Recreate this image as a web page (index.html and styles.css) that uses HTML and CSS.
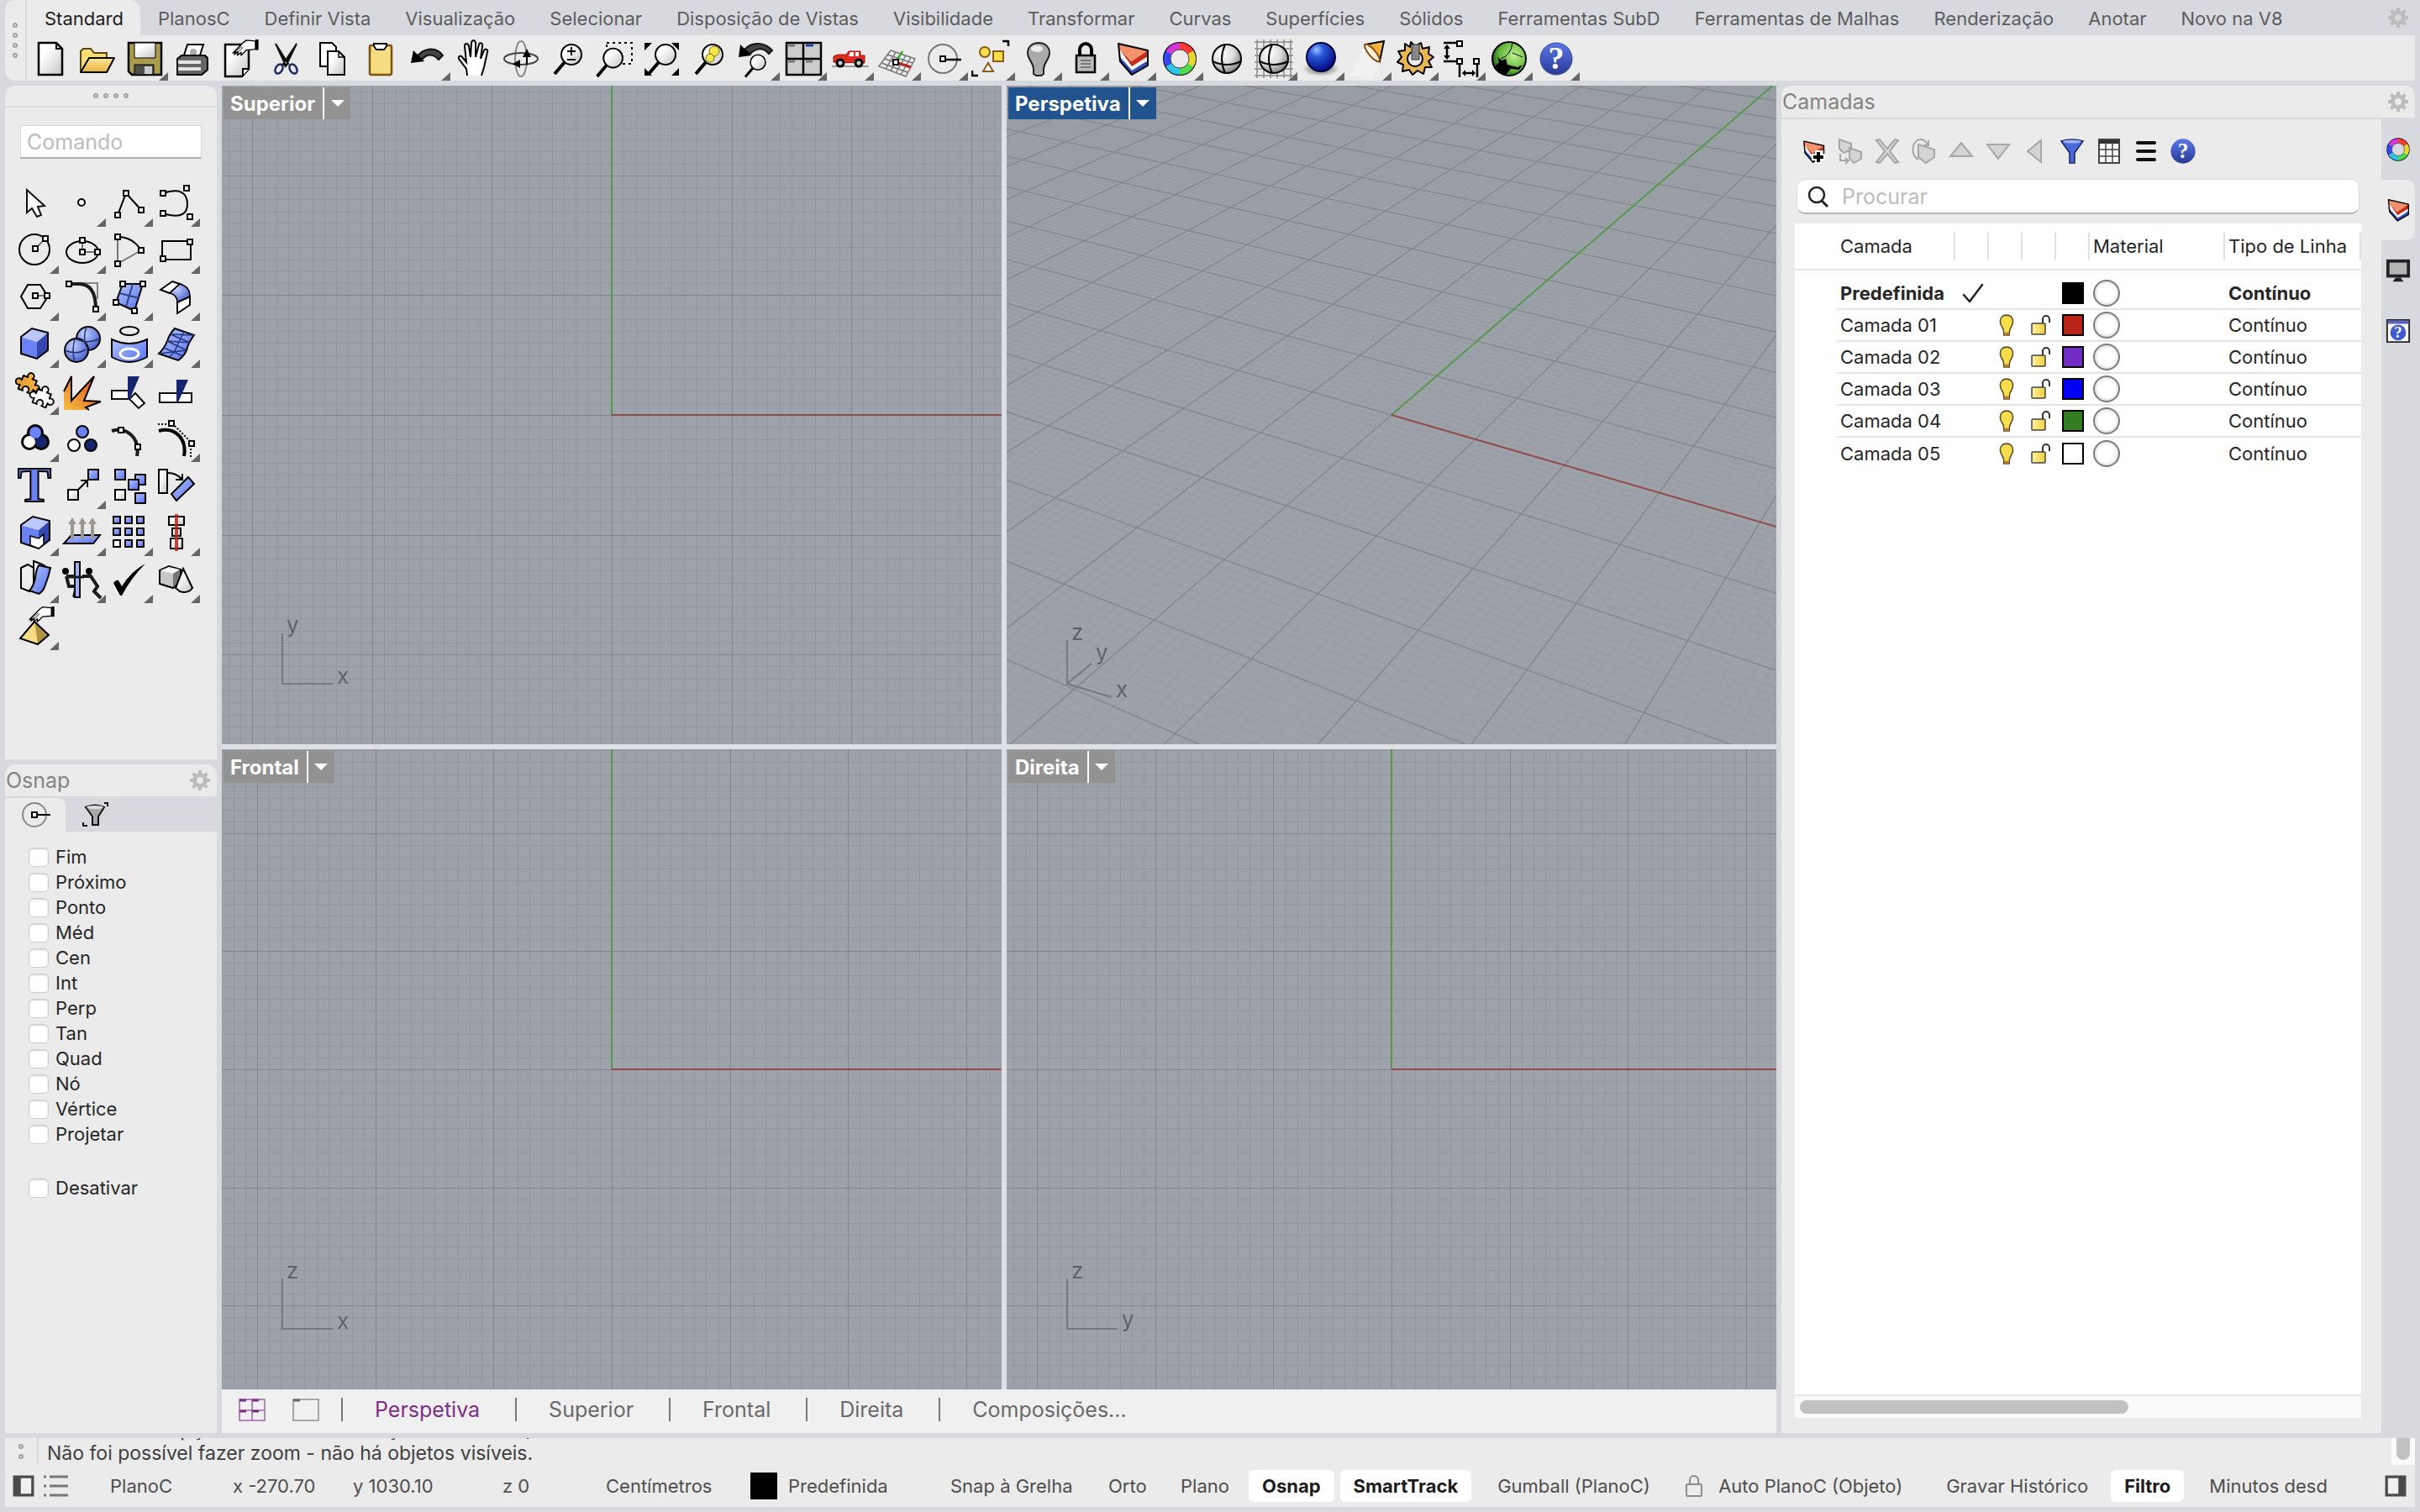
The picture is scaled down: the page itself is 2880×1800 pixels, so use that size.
FILE: index.html
```html
<!DOCTYPE html>
<html lang="pt">
<head>
    <meta charset="UTF-8">
    <meta name="viewport" content="width=device-width, initial-scale=1.0">
    <title>Rhino</title>
    <link rel="stylesheet" href="styles.css">
</head>
<body>
    <!-- shared gradients and shapes -->
    <svg class="defs" aria-hidden="true">
        <defs>
            <linearGradient id="paper" x1="0" y1="0" x2="1" y2="1"><stop offset="0.3" stop-color="#fff"/><stop offset="1" stop-color="#c4c4c4"/></linearGradient>
            <linearGradient id="blue" x1="0" y1="0" x2="1" y2="1"><stop offset="0" stop-color="#b4c4fb"/><stop offset="1" stop-color="#5470ee"/></linearGradient>
            <linearGradient id="yellow" x1="0" y1="0" x2="0" y2="1"><stop offset="0" stop-color="#fbe79a"/><stop offset="1" stop-color="#eab03a"/></linearGradient>
            <linearGradient id="orange" x1="0" y1="1" x2="1" y2="0"><stop offset="0" stop-color="#e8902a"/><stop offset="1" stop-color="#f5c04a"/></linearGradient>
            <linearGradient id="fire" x1="0" y1="1" x2="1" y2="0"><stop offset="0" stop-color="#f5c342"/><stop offset="1" stop-color="#e4421e"/></linearGradient>
            <linearGradient id="help" x1="0" y1="0" x2="0" y2="1"><stop offset="0" stop-color="#5b78e8"/><stop offset="1" stop-color="#2a3a94"/></linearGradient>
            <linearGradient id="lid" x1="0" y1="0" x2="1" y2="0"><stop offset="0" stop-color="#fff3a0"/><stop offset="1" stop-color="#f0cf3c"/></linearGradient>
            <radialGradient id="ball" cx="0.35" cy="0.3" r="0.8"><stop offset="0" stop-color="#fff"/><stop offset="0.5" stop-color="#dcdcdc"/><stop offset="1" stop-color="#6c6c6c"/></radialGradient>
            <radialGradient id="bball" cx="0.35" cy="0.3" r="0.8"><stop offset="0" stop-color="#c2d0ff"/><stop offset="1" stop-color="#3d57c8"/></radialGradient>
            <radialGradient id="navy" cx="0.35" cy="0.25" r="0.8"><stop offset="0" stop-color="#9cc4ff"/><stop offset="0.3" stop-color="#2a5ad8"/><stop offset="1" stop-color="#00007c"/></radialGradient>
            <radialGradient id="green" cx="0.65" cy="0.4" r="0.75"><stop offset="0" stop-color="#bdf28c"/><stop offset="0.6" stop-color="#63b43c"/><stop offset="1" stop-color="#123d0c"/></radialGradient>
            <radialGradient id="shade"><stop offset="0" stop-color="#555"/><stop offset="1" stop-color="#555" stop-opacity="0"/></radialGradient>
            <rect id="h" x="-3" y="-3" width="6" height="6" fill="#fff" stroke="#000" stroke-width="2"/>
            <g id="gear" fill="#bcbcbc"><circle cx="12" cy="12" r="6.5" fill="none" stroke="#bcbcbc" stroke-width="5"/><path d="M10 0h4v6h-4zM10 18h4v6h-4zM0 10h6v4H0zM18 10h6v4h-6zM2.100 4.900l2.800-2.800 4 4-2.800 2.800zM15.100 17.900l2.800-2.800 4 4-2.800 2.800zM19.100 2.100l2.800 2.800-4 4-2.800-2.800zM6.100 15.100l2.800 2.800-4 4-2.800-2.800z"/></g>
            <g id="layers"><path d="M7 20L23 37L42 26V32L23 43L9 27Z" fill="#2a4cc0"/><path d="M7 13L23 32L42 20V26L23 38L8 20Z" fill="#f4f4f4"/><path d="M22 27L42 14V21L23 33L7 10Z" fill="#c82c1c"/><path d="M7 6L42 14L23 27L7 12Z" fill="#f2916a"/><path d="M7 6L42 14V32L23 43L9 27Z" fill="none" stroke="#000" stroke-width="2" stroke-linejoin="round"/></g>
            <g id="wheel" fill="none" stroke-width="8"><circle cx="24" cy="24" r="19" stroke="#000" stroke-width="2"/><path d="M24 9A15 15 0 0 1 37 16.500" stroke="#ff3a30"/><path d="M37 16.500A15 15 0 0 1 37 31.500" stroke="#e6d82a"/><path d="M37 31.500A15 15 0 0 1 24 39" stroke="#4ed84a"/><path d="M24 39A15 15 0 0 1 11 31.500" stroke="#2ac4e8"/><path d="M11 31.500A15 15 0 0 1 11 16.500" stroke="#3446f0"/><path d="M11 16.500A15 15 0 0 1 24 9" stroke="#d436d8"/><circle cx="24" cy="24" r="11" stroke="#444" stroke-width="1"/></g>
            <g id="bulb"><path d="M8 1C3.500 1 1 4 1 8C1 13 5 15 5 20V23H11V20C11 15 15 13 15 8C15 4 12.500 1 8 1Z" fill="#f9dc4a" stroke="#54502e" stroke-width="1.500"/><path d="M5.500 20H10.500V23H5.500Z" fill="#c07a2c"/></g>
            <g id="unlock"><path d="M14 10V5a4 4 0 0 1 8 0V9" fill="none" stroke="#333" stroke-width="2"/><rect x="1" y="10" width="16" height="13" rx="1" fill="url(#lid)" stroke="#444" stroke-width="1.500"/></g>
            <g id="mag"><path d="M20 28L8 42" stroke="#000" stroke-width="4"/><circle cx="28" cy="19" r="12" fill="url(#paper)" stroke="#000" stroke-width="2"/></g>
            <g id="hand"><path d="M24 14L10 28L14 26L12 30L17 26L16 31L21 27L21 31L28 24L40 23V12L28 11Z" fill="#fff" stroke="#000" stroke-width="1.500" stroke-linejoin="round"/><path d="M40 10h4v14h-4z"/><path d="M15 25l7-6M18 26l6-6" fill="none" stroke="#000" stroke-width="1"/></g>
            <g id="check"><path d="M2 14L9 22L24 2" fill="none" stroke="#222" stroke-width="2.500" stroke-linecap="round" stroke-linejoin="round"/></g>
            <path id="piece" d="M0 0H6A4 4 0 1 1 12 0H18V6A4 4 0 1 1 18 12V18H12A4 4 0 1 0 6 18H0V12A4 4 0 1 1 0 6Z" stroke="#000" stroke-width="2" stroke-linejoin="round"/>
        </defs>
    </svg>

    <header class="topbar">
        <div class="grip"><i></i><i></i><i></i><i></i></div>
        <div class="topbar-main">
            <nav class="tabs">
                <button class="tab active">Standard</button>
                <button class="tab">PlanosC</button>
                <button class="tab">Definir Vista</button>
                <button class="tab">Visualização</button>
                <button class="tab">Selecionar</button>
                <button class="tab">Disposição de Vistas</button>
                <button class="tab">Visibilidade</button>
                <button class="tab">Transformar</button>
                <button class="tab">Curvas</button>
                <button class="tab">Superfícies</button>
                <button class="tab">Sólidos</button>
                <button class="tab">Ferramentas SubD</button>
                <button class="tab">Ferramentas de Malhas</button>
                <button class="tab">Renderização</button>
                <button class="tab">Anotar</button>
                <button class="tab">Novo na V8</button>
                <button class="gear-btn" aria-label="Opções"><svg viewBox="0 0 24 24"><use href="#gear"/></svg></button>
            </nav>
            <div class="toolbar">
                <button class="tool" aria-label="Novo"><svg viewBox="0 0 48 48"><path d="M10 5H31L38 12V43H10Z" fill="url(#paper)" stroke="#000" stroke-width="2.500"/><path d="M31 5V12H38" fill="none" stroke="#000" stroke-width="2"/></svg></button>
                <button class="tool" aria-label="Abrir"><svg viewBox="0 0 48 48"><path d="M4 40V15L7 12H16L20 17H35V23" fill="#f7dc78" stroke="#5d4408" stroke-width="2"/><path d="M4 40L14 23H44L35 40Z" fill="url(#yellow)" stroke="#000" stroke-width="2" stroke-linejoin="round"/></svg></button>
                <button class="tool more" aria-label="Gravar"><svg viewBox="0 0 48 48"><path d="M5 5H44V43H9L5 39Z" fill="#a99c4c" stroke="#000" stroke-width="2.500"/><path d="M12 5H37V23H12Z" fill="url(#paper)" stroke="#000"/><path d="M12 31H35V43H12Z" fill="#4d4d4d" stroke="#000"/><path d="M24 33H33V42H24Z" fill="#ccc"/></svg></button>
                <button class="tool" aria-label="Imprimir"><svg viewBox="0 0 48 48"><path d="M14 23L19 7H38L33 23Z" fill="#fff" stroke="#000" stroke-width="2"/><circle cx="26" cy="16" r="4" fill="#aaa"/><path d="M7 24L12 20H40L43 23V37L36 43H7Z" fill="#666" stroke="#000" stroke-width="2"/><path d="M8 26H35V30H8ZM8 34H35V38H8Z" fill="#e4e4e4"/></svg></button>
                <button class="tool" aria-label="Notas"><svg viewBox="0 0 48 48"><path d="M8 7H36V36L28 45H8Z" fill="url(#paper)" stroke="#000" stroke-width="2.500"/><path d="M36 36H29V44" fill="#fff" stroke="#000" stroke-width="2"/><g transform="translate(8 -8) scale(.9)"><use href="#hand"/></g></svg></button>
                <button class="tool" aria-label="Cortar"><svg viewBox="0 0 48 48"><path d="M12 6L27 30L24 32ZM37 6L21 30L24 33Z" stroke="#111" stroke-width="2"/><ellipse cx="16" cy="36" rx="4" ry="6" transform="rotate(30 16 36)" fill="none" stroke="#1c2c66" stroke-width="2.500"/><ellipse cx="33" cy="36" rx="4" ry="6" transform="rotate(-30 33 36)" fill="none" stroke="#1c2c66" stroke-width="2.500"/></svg></button>
                <button class="tool" aria-label="Copiar"><svg viewBox="0 0 48 48"><path d="M9 5H23L28 10V33H9Z" fill="#fff" stroke="#000" stroke-width="2"/><path d="M18 15H31L38 22V43H18Z" fill="url(#paper)" stroke="#000" stroke-width="2"/><path d="M31 15V22H38" fill="none" stroke="#000" stroke-width="1.500"/></svg></button>
                <button class="tool" aria-label="Colar"><svg viewBox="0 0 48 48"><rect x="12" y="8" width="26" height="35" rx="2" fill="#f8dc82" stroke="#7a5410" stroke-width="2.500"/><path d="M17 6H32V9L29 13H20L17 9Z" fill="#fff" stroke="#000" stroke-width="2"/></svg></button>
                <button class="tool more" aria-label="Anular"><svg viewBox="0 0 48 48"><path d="M12 22C19 12 34 8 43 20L38 25C32 18 24 18 19 24Z" fill="#444" stroke="#111" stroke-width="2"/><path d="M5 29L8 14L21 27Z"/></svg></button>
                <button class="tool" aria-label="Panorâmica"><svg viewBox="0 0 48 48"><path d="M16 44L15 36L6 24C5 20 9 20 10 22L15 28L13 9C13 5 17 5 18 9L20 22L21 5C22 1 25 1 26 5V22L30 7C31 4 35 5 34 9L32 24L36 14C38 11 41 13 40 16L36 34L33 44" fill="#fff" stroke="#000" stroke-width="2"/></svg></button>
                <button class="tool" aria-label="Rodar Vista"><svg viewBox="0 0 48 48"><ellipse cx="24" cy="24" rx="7" ry="21" fill="none" stroke="#888" stroke-width="2"/><ellipse cx="24" cy="24" rx="20" ry="7" fill="none" stroke="#444" stroke-width="2"/><path d="M31 20V31" stroke="#000" stroke-width="2"/><path d="M26 22L31 12L36 22ZM14 30L23 25V35Z"/></svg></button>
                <button class="tool" aria-label="Zoom"><svg viewBox="0 0 48 48"><use href="#mag"/><path d="M23 15h10M28 10v10M23 25h10" stroke="#000" stroke-width="2"/></svg></button>
                <button class="tool" aria-label="Zoom Janela"><svg viewBox="0 0 48 48"><path d="M14 5H44V30H14Z" fill="none" stroke="#000" stroke-width="2" stroke-dasharray="3 4"/><g transform="translate(-5 5) scale(.95)"><use href="#mag"/></g></svg></button>
                <button class="tool" aria-label="Zoom Extensão"><svg viewBox="0 0 48 48"><use href="#mag"/><path d="M3 5h9l-9 9zM44 5h-9l9 9zM3 44h9l-9-9zM44 44h-9l9-9z"/></svg></button>
                <button class="tool" aria-label="Zoom Seleção"><svg viewBox="0 0 48 48"><use href="#mag"/><circle cx="30" cy="15" r="6" fill="#f8e84a" stroke="#776d12"/><circle cx="25" cy="23" r="5" fill="#f8e84a" stroke="#776d12"/></svg></button>
                <button class="tool more" aria-label="Anular Vista"><svg viewBox="0 0 48 48"><path d="M10 13C19 3 34 4 43 14L39 18C32 10 24 11 17 18Z" fill="#444" stroke="#111" stroke-width="2"/><path d="M3 22L5 7L18 20Z"/><g transform="translate(5 14) scale(.75)"><use href="#mag"/></g></svg></button>
                <button class="tool more" aria-label="Quatro Vistas"><svg viewBox="0 0 48 48"><path d="M4 5H45V43H4Z" fill="#ccc" stroke="#000" stroke-width="2.500"/><path d="M24 5V43M4 24H45" stroke="#000" stroke-width="2.500"/><path d="M6 8h8M6 27h8M27 27h8" stroke="#777" stroke-width="3"/><path d="M27 8h9" stroke="#1c3ca0" stroke-width="3"/></svg></button>
                <button class="tool more" aria-label="Vistas Definidas"><svg viewBox="0 0 48 48"><path d="M2 33H46" stroke="#999" stroke-width="2"/><path d="M4 28V21L9 19H19L22 15H36V20H41V29Z" fill="#e02c20" stroke="#9c1408"/><path d="M24 16h4v5h-6zM30 16h4v5h-4z" fill="#fff"/><circle cx="12" cy="29" r="4" fill="#ccc" stroke="#000" stroke-width="3"/><circle cx="34" cy="29" r="4" fill="#ccc" stroke="#000" stroke-width="3"/></svg></button>
                <button class="tool more" aria-label="Plano de Construção"><svg viewBox="0 0 48 48"><path d="M16 14L45 24L34 45L2 33ZM12 19L42 29M9 24L39 34M5 29L36 40M22 16L10 36M28 18L16 38M34 20L22 41M40 22L28 43" fill="none" stroke="#777" stroke-width="1.500"/><path d="M22 28L30 15" stroke="#3cae2c" stroke-width="2.500"/><path d="M22 28L40 34" stroke="#c02018" stroke-width="3"/><use href="#h" x="22" y="28"/></svg></button>
                <button class="tool more" aria-label="Snap ao Objeto"><svg viewBox="0 0 48 48"><circle cx="22" cy="24" r="17" fill="none" stroke="#777" stroke-width="2"/><path d="M22 25H44" stroke="#000" stroke-width="2.500"/><use href="#h" x="22" y="24"/></svg></button>
                <button class="tool more" aria-label="Selecionar"><svg viewBox="0 0 48 48"><circle cx="16" cy="16" r="6" fill="#f8e048" stroke="#8a5a18" stroke-width="2"/><path d="M26 15H38V27H26Z" fill="#f8e048" stroke="#8a5a18" stroke-width="2"/><path d="M20 29L26 39H14Z" fill="#fff" stroke="#8a5a18" stroke-width="2"/><path d="M37 3H44V9M1 38V44H8" fill="none" stroke="#000" stroke-width="2.500"/></svg></button>
                <button class="tool more" aria-label="Ocultar"><svg viewBox="0 0 48 48"><path d="M24 5C16 5 11 10 11 17C11 25 18 28 18 37V42L21 44H27L30 42V37C30 28 37 25 37 17C37 10 32 5 24 5Z" fill="#aaa" stroke="#222" stroke-width="2"/><ellipse cx="22" cy="12" rx="7" ry="4" fill="#eee"/></svg></button>
                <button class="tool more" aria-label="Bloquear"><svg viewBox="0 0 48 48"><path d="M17 21V13a7 7 0 0 1 14 0V21" fill="none" stroke="#000" stroke-width="4"/><rect x="13" y="20" width="22" height="20" fill="#bbb" stroke="#000" stroke-width="2.500"/><path d="M18 26h12M18 30h12M18 34h12" stroke="#777" stroke-width="2"/></svg></button>
                <button class="tool more" aria-label="Camadas"><svg viewBox="0 0 48 48"><use href="#layers"/></svg></button>
                <button class="tool more" aria-label="Propriedades"><svg viewBox="0 0 48 48"><use href="#wheel"/></svg></button>
                <button class="tool" aria-label="Sombrear"><svg viewBox="0 0 48 48"><circle cx="24" cy="24" r="17" fill="url(#ball)" stroke="#000" stroke-width="2"/><path d="M7 27Q24 35 41 27M22 7Q14 24 22 41" fill="none" stroke="#000" stroke-width="2"/></svg></button>
                <button class="tool more" aria-label="Modo de Visualização"><svg viewBox="0 0 48 48"><path d="M4 1V47M12 1V47M20 1V47M28 1V47M36 1V47M44 1V47M1 4H47M1 12H47M1 20H47M1 28H47M1 36H47M1 44H47" stroke="#888" stroke-width="1.500"/><circle cx="24" cy="24" r="17" fill="url(#ball)" stroke="#000" stroke-width="2"/><path d="M7 27Q24 35 41 27M22 7Q14 24 22 41" fill="none" stroke="#000" stroke-width="2"/></svg></button>
                <button class="tool more" aria-label="Renderizar"><svg viewBox="0 0 48 48"><ellipse cx="24" cy="36" rx="22" ry="9" fill="url(#shade)"/><circle cx="24" cy="22" r="17" fill="url(#navy)" stroke="#00003c" stroke-width="2"/></svg></button>
                <button class="tool more" aria-label="Luzes"><svg viewBox="0 0 48 48"><path d="M2 44L20 8L38 26L30 46Z" fill="#fff" opacity=".3"/><path d="M21 7L43 3L38 27Z" fill="url(#orange)" stroke="#000" stroke-width="2"/><ellipse cx="29" cy="17" rx="4" ry="13" transform="rotate(-40 29 17)" fill="#fff3d8" stroke="#8a4a10" stroke-width="2"/></svg></button>
                <button class="tool more" aria-label="Opções"><svg viewBox="0 0 48 48"><path d="M19 4L24 9L31 5L33 12L41 10L40 18L46 22L40 27L44 34L36 34L34 42L27 38L21 43L17 37L9 39L10 31L3 28L8 22L4 15L12 14L12 6L18 10Z" fill="#eab556" stroke="#000" stroke-width="2" stroke-linejoin="round"/><circle cx="24" cy="24" r="9" fill="#ebebeb" stroke="#000" stroke-width="2"/><path d="M20 7h9v18h-9z" fill="#888" stroke="#333"/></svg></button>
                <button class="tool more" aria-label="Cotas"><svg viewBox="0 0 48 48"><path d="M2 5H20M2 27H20M21 28V46M42 28V46M6 9V23M26 41H38" fill="none" stroke="#000" stroke-width="2.500"/><path d="M2 12L6 7L10 12ZM2 20L6 25L10 20ZM28 37L24 41L28 45ZM36 37L40 41L36 45Z"/><use href="#h" x="21" y="6"/><use href="#h" x="21" y="27"/><use href="#h" x="41" y="27"/></svg></button>
                <button class="tool more" aria-label="Grasshopper"><svg viewBox="0 0 48 48"><circle cx="24" cy="24" r="20" fill="url(#green)" stroke="#000" stroke-width="2"/><path d="M6 34L12 28L10 22L15 26L20 24L22 31L34 34L40 31L36 37L26 36L20 43Q10 42 6 34Z"/><path d="M14 24Q26 20 28 5M28 17L40 22" fill="none" stroke="#000"/></svg></button>
                <button class="tool more" aria-label="Ajuda"><svg viewBox="0 0 48 48"><circle cx="24" cy="24" r="19" fill="url(#help)" stroke="#32458f"/><text class="q" x="24" y="36">?</text></svg></button>
            </div>
        </div>
    </header>

    <main class="workspace">
        <aside class="left">
            <section class="panel tools">
                <div class="grip-row"><i></i><i></i><i></i><i></i></div>
                <input class="command" type="text" placeholder="Comando" aria-label="Comando">
                <div class="palette">
                    <button class="tool" aria-label="Cancelar"><svg viewBox="0 0 48 48"><path d="M14 8V35L20 30L26 40L31 38L27 28L35 27Z" fill="#fff" stroke="#111" stroke-width="2"/></svg></button>
                    <button class="tool more" aria-label="Ponto"><svg viewBox="0 0 48 48"><circle cx="23" cy="23" r="4" fill="#fff" stroke="#000" stroke-width="2"/></svg></button>
                    <button class="tool more" aria-label="Polilinha"><svg viewBox="0 0 48 48"><path d="M10 38L20 12L38 32" fill="none" stroke="#000" stroke-width="2"/><use href="#h" x="10" y="38"/><use href="#h" x="20" y="12"/><use href="#h" x="38" y="32"/></svg></button>
                    <button class="tool more" aria-label="Curva"><svg viewBox="0 0 48 48"><path d="M8 12C26 6 37 10 37 25C37 40 24 41 8 36" fill="none" stroke="#000" stroke-width="2"/><use href="#h" x="8" y="12"/><use href="#h" x="36" y="6"/><use href="#h" x="8" y="36"/><use href="#h" x="40" y="40"/></svg></button>

                    <button class="tool more" aria-label="Círculo"><svg viewBox="0 0 48 48"><circle cx="23" cy="23" r="18" fill="none" stroke="#000" stroke-width="2"/><path d="M24 22L36 10" stroke="#777" stroke-width="2"/><use href="#h" x="36" y="10"/><use href="#h" x="24" y="22"/></svg></button>
                    <button class="tool more" aria-label="Elipse"><svg viewBox="0 0 48 48"><ellipse cx="24" cy="26" rx="19" ry="13" fill="none" stroke="#000" stroke-width="2"/><path d="M24 12V26H42" fill="none" stroke="#777" stroke-width="2"/><use href="#h" x="24" y="12"/><use href="#h" x="24" y="26"/><use href="#h" x="42" y="26"/></svg></button>
                    <button class="tool more" aria-label="Arco"><svg viewBox="0 0 48 48"><path d="M10 8V40L38 24" fill="none" stroke="#777" stroke-width="2"/><path d="M10 8Q28 8 38 24" fill="none" stroke="#000" stroke-width="2"/><use href="#h" x="10" y="8"/><use href="#h" x="38" y="24"/><use href="#h" x="10" y="40"/></svg></button>
                    <button class="tool more" aria-label="Retângulo"><svg viewBox="0 0 48 48"><path d="M7 13H41V35H7Z" fill="none" stroke="#000" stroke-width="2"/><use href="#h" x="40" y="14"/><use href="#h" x="8" y="34"/></svg></button>

                    <button class="tool more" aria-label="Polígono"><svg viewBox="0 0 48 48"><path d="M7 23L15 9H30L39 23L30 37H15Z" fill="none" stroke="#000" stroke-width="2"/><path d="M24 22H38" stroke="#777" stroke-width="2"/><use href="#h" x="24" y="22"/><use href="#h" x="38" y="22"/></svg></button>
                    <button class="tool more" aria-label="Concordância"><svg viewBox="0 0 48 48"><path d="M20 7H42V26" fill="none" stroke="#888" stroke-width="2"/><path d="M8 8H20Q40 8 40 38" fill="none" stroke="#1c1c1c" stroke-width="4"/><use href="#h" x="8" y="8"/><use href="#h" x="40" y="38"/></svg></button>
                    <button class="tool more" aria-label="Superfície por Pontos"><svg viewBox="0 0 48 48"><path d="M16 8H40L30 40L8 30Z" fill="url(#blue)" stroke="#000" stroke-width="2"/><path d="M28 8L20 35M12 19L36 25" stroke="#333f80" stroke-width="2"/><use href="#h" x="16" y="8"/><use href="#h" x="40" y="8"/><use href="#h" x="8" y="30"/><use href="#h" x="30" y="40"/></svg></button>
                    <button class="tool more" aria-label="Concordar Superfícies"><svg viewBox="0 0 48 48"><path d="M5 15L19 5L28 8L16 19Z" fill="#fff" stroke="#000" stroke-width="2"/><path d="M28 8Q40 11 40 23L25 30Q25 21 16 19Z" fill="url(#bball)" stroke="#000" stroke-width="1.500"/><path d="M40 23V33L25 43V30Z" fill="#fff" stroke="#000" stroke-width="2"/></svg></button>

                    <button class="tool more" aria-label="Caixa"><svg viewBox="0 0 48 48"><path d="M7 15L26 21V41L7 35Z" fill="#6a82f4"/><path d="M26 21L39 10V31L26 41Z" fill="#3347ae"/><path d="M7 15L20 5L39 10L26 21Z" fill="#bcc8fb"/><path d="M7 15L20 5L39 10V31L26 41L7 35Z" fill="none" stroke="#000" stroke-width="2"/></svg></button>
                    <button class="tool more" aria-label="Booleana"><svg viewBox="0 0 48 48"><circle cx="31" cy="17" r="14" fill="url(#bball)" stroke="#000" stroke-width="2"/><circle cx="17" cy="31" r="14" fill="url(#bball)" stroke="#000" stroke-width="2"/><path d="M17 18Q31 24 45 17M29 3Q24 17 29 27M3 31Q17 37 28 30M15 18Q11 31 15 45" fill="none" stroke="#26346e" stroke-width="1.500"/></svg></button>
                    <button class="tool more" aria-label="Projetar"><svg viewBox="0 0 48 48"><ellipse cx="24" cy="8" rx="11" ry="5" fill="none" stroke="#000" stroke-width="2"/><path d="M3 18Q24 28 45 18V39Q24 51 3 39Z" fill="url(#blue)" stroke="#000" stroke-width="2"/><ellipse cx="24" cy="35" rx="11" ry="6" fill="none" stroke="#fff" stroke-width="3"/></svg></button>
                    <button class="tool more" aria-label="Malha"><svg viewBox="0 0 48 48"><path d="M22 5L45 13Q38 22 36 31Q33 38 26 43L3 35Q10 28 13 20Q16 11 22 5Z" fill="url(#blue)" stroke="#000" stroke-width="2"/><path d="M13 20L36 31M17 12L40 22M9 28L32 38M33 9Q28 18 25 25Q22 34 15 39M45 13L17 12M36 31L3 35M40 22L13 20" fill="none" stroke="#27357a" stroke-width="1.500"/></svg></button>

                    <button class="tool more" aria-label="Unir"><svg viewBox="0 0 48 48"><g transform="translate(10 5) rotate(22) scale(.95)"><use href="#piece" fill="url(#orange)"/></g><g transform="translate(27 21) rotate(22) scale(.95)"><use href="#piece" fill="#fff"/></g></svg></button>
                    <button class="tool" aria-label="Explodir"><svg viewBox="0 0 48 48"><path d="M2 46V24L11 6V35L38 6L26 35L46 36L28 43L32 46Z" fill="url(#fire)"/><path d="M2 24L11 6V35L38 6L26 35L46 36L28 43L32 46" fill="none" stroke="#000" stroke-width="2"/></svg></button>
                    <button class="tool" aria-label="Aparar"><svg viewBox="0 0 48 48"><path d="M3 23H23V33H3Z" fill="#fff" stroke="#111" stroke-width="2"/><path d="M31 26L42 38L35 44L24 33Z" fill="#fff" stroke="#111" stroke-width="2"/><path d="M22 6H36L24 34H22Z" fill="#172570"/></svg></button>
                    <button class="tool" aria-label="Dividir"><svg viewBox="0 0 48 48"><path d="M4 26H42V37H4Z" fill="#fff" stroke="#111" stroke-width="2"/><path d="M24 10H38L26 37H24Z" fill="#172570"/></svg></button>

                    <button class="tool more" aria-label="Agrupar"><svg viewBox="0 0 48 48"><g stroke="#000" stroke-width="4"><circle cx="24" cy="17" r="8"/><circle cx="17" cy="28" r="8"/><circle cx="31" cy="28" r="8"/></g><circle cx="31" cy="28" r="7" fill="#172570"/><circle cx="17" cy="28" r="7" fill="#fff"/><circle cx="24" cy="17" r="7" fill="#6a82f4"/></svg></button>
                    <button class="tool" aria-label="Desagrupar"><svg viewBox="0 0 48 48"><g stroke="#000" stroke-width="2"><circle cx="24" cy="16" r="7" fill="#6a82f4"/><circle cx="14" cy="32" r="7" fill="#fff"/><circle cx="34" cy="32" r="7" fill="#172570"/></g></svg></button>
                    <button class="tool" aria-label="Editar Pontos"><svg viewBox="0 0 48 48"><path d="M3 15C20 10 37 22 33 45" fill="none" stroke="#1c1c1c" stroke-width="4"/><use href="#h" x="14" y="14"/><use href="#h" x="34" y="34"/></svg></button>
                    <button class="tool more" aria-label="Pontos de Controlo"><svg viewBox="0 0 48 48"><path d="M3 15C20 10 37 22 33 45" fill="none" stroke="#000" stroke-width="4"/><path d="M2 7H14M22 9L40 27M41 36V46" fill="none" stroke="#000" stroke-width="2" stroke-dasharray="2 2"/><use href="#h" x="18" y="6"/><use href="#h" x="42" y="30"/></svg></button>

                    <button class="tool" aria-label="Texto"><svg viewBox="0 0 48 48"><text class="letter-t" x="23" y="43">T</text></svg></button>
                    <button class="tool more" aria-label="Mover"><svg viewBox="0 0 48 48"><path d="M19 29L30 18M22 18H30V26" fill="none" stroke="#000" stroke-width="2"/><rect x="7" y="29" width="12" height="12" fill="url(#paper)" stroke="#000" stroke-width="2"/><rect x="31" y="5" width="12" height="12" fill="url(#blue)" stroke="#000" stroke-width="2"/></svg></button>
                    <button class="tool" aria-label="Copiar Objeto"><svg viewBox="0 0 48 48"><g fill="url(#blue)" stroke="#000" stroke-width="2"><rect x="7" y="5" width="12" height="12"/><rect x="31" y="11" width="12" height="12"/><rect x="23" y="17" width="12" height="12"/><rect x="31" y="33" width="12" height="12"/><rect x="7" y="29" width="12" height="12" fill="url(#paper)"/></g></svg></button>
                    <button class="tool" aria-label="Rodar"><svg viewBox="0 0 48 48"><rect x="3" y="5" width="10" height="28" fill="url(#paper)" stroke="#000" stroke-width="2"/><path d="M38 14L45 22L24 42L18 34Z" fill="url(#blue)" stroke="#000" stroke-width="2"/><path d="M14 9Q24 9 31 17M31 10V17H23" fill="none" stroke="#000" stroke-width="2"/></svg></button>

                    <button class="tool more" aria-label="Editar Sólidos"><svg viewBox="0 0 48 48"><path d="M7 15L28 21V43L7 36Z" fill="#6a82f4"/><path d="M28 21L41 10V33L28 43Z" fill="#3347ae"/><path d="M7 15L21 5L41 10L28 21Z" fill="#bcc8fb"/><path d="M7 15L21 5L41 10V33L28 43L7 36Z" fill="none" stroke="#000" stroke-width="2"/><path d="M18 28L28 31L34 26V38L28 43L18 39Z" fill="#fff" stroke="#000" stroke-width="1.500"/></svg></button>
                    <button class="tool more" aria-label="Extrudir"><svg viewBox="0 0 48 48"><path d="M11 27H45L37 37H2Z" fill="url(#blue)" stroke="#000" stroke-width="2"/><path d="M10 32V14H7L12 6L17 14H14V32ZM22 32V14H19L24 6L29 14H26V32ZM34 32V14H31L36 6L41 14H38V32Z" fill="#9c9690"/></svg></button>
                    <button class="tool more" aria-label="Matriz"><svg viewBox="0 0 48 48"><g fill="url(#blue)" stroke="#000" stroke-width="2"><rect x="5" y="5" width="8" height="8"/><rect x="19" y="5" width="8" height="8"/><rect x="33" y="5" width="8" height="8"/><rect x="5" y="19" width="8" height="8"/><rect x="19" y="19" width="8" height="8"/><rect x="33" y="19" width="8" height="8"/><rect x="5" y="33" width="8" height="8" fill="#fff"/><rect x="19" y="33" width="8" height="8"/><rect x="33" y="33" width="8" height="8"/></g></svg></button>
                    <button class="tool more" aria-label="Alinhar"><svg viewBox="0 0 48 48"><g fill="url(#paper)" stroke="#000" stroke-width="2"><rect x="15" y="5" width="18" height="10"/><rect x="19" y="19" width="10" height="9"/><rect x="17" y="31" width="14" height="12"/></g><path d="M24 2V46" stroke="#b8281c" stroke-width="4" opacity=".85"/></svg></button>

                    <button class="tool more" aria-label="Dobrar"><svg viewBox="0 0 48 48"><path d="M7 10L15 6L22 10V32L17 38L7 34Z" fill="#eee" stroke="#000" stroke-width="2"/><path d="M22 10V2L30 5L36 8" fill="#fff" stroke="#000" stroke-width="2"/><path d="M28 7L42 10Q40 20 36 30Q34 38 28 41L17 37Q22 32 24 22Q25 12 28 7Z" fill="url(#blue)" stroke="#000" stroke-width="2"/></svg></button>
                    <button class="tool more" aria-label="Empurrar e Puxar"><svg viewBox="0 0 48 48"><g stroke="#1c1c1c" fill="none" stroke-width="4"><path d="M5 20L8 32H17L14 45M5 20H20M24 20H34L42 32L38 38L46 46"/></g><circle cx="4" cy="14" r="4"/><circle cx="32" cy="14" r="4"/><rect x="15" y="3" width="6" height="42" fill="#a0b2fa" stroke="#000" stroke-width="2"/><path d="M6 21H26" stroke="#1c1c1c" stroke-width="3"/></svg></button>
                    <button class="tool more" aria-label="Verificar"><svg viewBox="0 0 48 48"><path d="M5 28Q8 24 11 25L15 32Q26 14 43 5Q26 22 15 43H13Z"/></svg></button>
                    <button class="tool more" aria-label="Malhas"><svg viewBox="0 0 48 48"><path d="M4 13L15 8L29 12L28 26L20 34L4 29Z" fill="#c8c8c8" stroke="#000" stroke-width="2"/><path d="M5 13L15 9L28 12L20 17Z" fill="#f4f4f4"/><path d="M20 17L28 12V26L20 33Z" fill="#777"/><path d="M32 11L43 34Q38 41 28 38L23 34Z" fill="url(#paper)" stroke="#000" stroke-width="2"/></svg></button>

                    <button class="tool more" aria-label="Gumball"><svg viewBox="0 0 48 48"><path d="M23 18L6 38L27 45Z" fill="#f7dc82"/><path d="M23 18L40 34L27 45Z" fill="#b09440"/><path d="M23 18L40 34L27 45L6 38Z" fill="none" stroke="#000" stroke-width="2"/><g transform="translate(8 -9) scale(.88)"><use href="#hand"/></g></svg></button>
                </div>
            </section>

            <section class="panel osnap">
                <div class="panel-head">
                    <h2>Osnap</h2>
                    <button class="gear-btn" aria-label="Opções do Osnap"><svg viewBox="0 0 24 24"><use href="#gear"/></svg></button>
                </div>
                <div class="osnap-tabs">
                    <button class="osnap-tab active" aria-label="Snaps"><svg viewBox="0 0 36 36"><circle cx="17" cy="18" r="14" fill="none" stroke="#888" stroke-width="2"/><path d="M18 18H36" stroke="#000" stroke-width="2"/><rect x="14" y="15" width="6" height="6" fill="#fff" stroke="#000" stroke-width="2"/></svg></button>
                    <button class="osnap-tab" aria-label="Filtros"><svg viewBox="0 0 36 36"><path d="M6 9L14 20V30H21V20L28 9Q17 4 6 9Z" fill="#a8a8a8" stroke="#111" stroke-width="2"/><ellipse cx="17" cy="9" rx="10" ry="2" fill="#ddd"/><path d="M28 4H32V8M3 27V31H8" fill="none" stroke="#111" stroke-width="2"/></svg></button>
                </div>
                <div class="snaps">
                    <label class="snap"><input type="checkbox"> Fim</label>
                    <label class="snap"><input type="checkbox"> Próximo</label>
                    <label class="snap"><input type="checkbox"> Ponto</label>
                    <label class="snap"><input type="checkbox"> Méd</label>
                    <label class="snap"><input type="checkbox"> Cen</label>
                    <label class="snap"><input type="checkbox"> Int</label>
                    <label class="snap"><input type="checkbox"> Perp</label>
                    <label class="snap"><input type="checkbox"> Tan</label>
                    <label class="snap"><input type="checkbox"> Quad</label>
                    <label class="snap"><input type="checkbox"> Nó</label>
                    <label class="snap"><input type="checkbox"> Vértice</label>
                    <label class="snap"><input type="checkbox"> Projetar</label>
                    <label class="snap last"><input type="checkbox"> Desativar</label>
                </div>
            </section>
        </aside>

        <section class="center">
            <div class="views">
                <div class="view">
                    <canvas data-step="142.6"></canvas>
                    <div class="view-title"><button>Superior</button><button class="arrow" aria-label="Menu Superior"></button></div>
                    <svg class="axes" viewBox="0 0 120 120"><path d="M22 28V88H82"/><text x="27" y="27">y</text><text x="87" y="88">x</text></svg>
                </div>
                <div class="view">
                    <canvas data-step="0"></canvas>
                    <div class="view-title current"><button>Perspetiva</button><button class="arrow" aria-label="Menu Perspetiva"></button></div>
                    <svg class="axes" viewBox="0 0 120 120"><path d="M22 36V88L51 64M22 88L75 104"/><text x="27" y="36">z</text><text x="56" y="60">y</text><text x="80" y="104">x</text></svg>
                </div>
                <div class="view">
                    <canvas data-step="140.6"></canvas>
                    <div class="view-title"><button>Frontal</button><button class="arrow" aria-label="Menu Frontal"></button></div>
                    <svg class="axes" viewBox="0 0 120 120"><path d="M22 28V88H82"/><text x="27" y="28">z</text><text x="87" y="88">x</text></svg>
                </div>
                <div class="view">
                    <canvas data-step="140.6"></canvas>
                    <div class="view-title"><button>Direita</button><button class="arrow" aria-label="Menu Direita"></button></div>
                    <svg class="axes" viewBox="0 0 120 120"><path d="M22 28V88H82"/><text x="27" y="28">z</text><text x="87" y="86">y</text></svg>
                </div>
            </div>
            <nav class="view-tabs">
                <button class="layout-btn" aria-label="Quatro vistas"><svg viewBox="0 0 32 28"><path d="M1 2H31V27H1ZM16 2V27M1 15H31" fill="none" stroke="#9a62a4" stroke-width="1.500"/><path d="M1 3h8M16 3h8M1 16h8M16 16h8" stroke="#7d2f8a" stroke-width="3"/></svg></button>
                <button class="layout-btn" aria-label="Uma vista"><svg viewBox="0 0 32 28"><path d="M1 2H31V27H1Z" fill="none" stroke="#8c8c8c" stroke-width="1.500"/><path d="M1 3h8" stroke="#666" stroke-width="3"/></svg></button>
                <button class="view-tab current">Perspetiva</button>
                <button class="view-tab">Superior</button>
                <button class="view-tab">Frontal</button>
                <button class="view-tab">Direita</button>
                <button class="view-tab">Composições...</button>
            </nav>
        </section>

        <aside class="panel right">
            <div class="panel-head">
                <h2>Camadas</h2>
                <button class="gear-btn" aria-label="Opções das Camadas"><svg viewBox="0 0 24 24"><use href="#gear"/></svg></button>
            </div>
            <div class="right-body">
                <div class="layers">
                    <div class="layer-tools">
                        <button aria-label="Nova Camada"><svg viewBox="0 0 32 32"><g transform="scale(.68)"><use href="#layers"/></g><path d="M22 15V31M14 23H30" stroke="#fff" stroke-width="8"/><path d="M22 17V29M16 23H28" stroke="#000" stroke-width="4"/></svg></button>
                        <button aria-label="Nova Subcamada"><svg viewBox="0 0 32 32" class="dim"><path d="M3 2L17 7V14L8 18L3 13ZM15 12L29 17V25L20 30L15 24Z"/><path d="M4 19V27H13M10 24l4 3-4 4" fill="none"/></svg></button>
                        <button aria-label="Eliminar"><svg viewBox="0 0 32 32" class="dim"><path d="M3 3L7 2L16 13L25 2L29 3L19 16L29 29L25 30L16 19L7 30L3 29L13 16Z"/></svg></button>
                        <button aria-label="Duplicar"><svg viewBox="0 0 32 32" class="dim"><path d="M9 26C1 22 0 8 8 3C13 0 18 4 20 8M21 3V9H15" fill="none"/><path d="M9 8L28 14V23L18 30L9 23Z"/></svg></button>
                        <button aria-label="Mover para Cima"><svg viewBox="0 0 32 32" class="dim"><path d="M16 6L29 22H3Z"/></svg></button>
                        <button aria-label="Mover para Baixo"><svg viewBox="0 0 32 32" class="dim"><path d="M16 25L29 8H3Z"/></svg></button>
                        <button aria-label="Subir Nível"><svg viewBox="0 0 32 32" class="dim"><path d="M7 16L23 3V29Z"/></svg></button>
                        <button aria-label="Filtrar"><svg viewBox="0 0 32 32"><path d="M3 4L13 18V30H19V18L29 4Q16 0 3 4Z" fill="#4a68d8" stroke="#15245c" stroke-width="1.500"/><ellipse cx="16" cy="4.500" rx="11" ry="2" fill="#9fb2f8"/></svg></button>
                        <button aria-label="Colunas"><svg viewBox="0 0 32 32"><path d="M4 2H28V30H4Z" fill="#fff" stroke="#444" stroke-width="2"/><path d="M4 3H28V7H4Z" fill="#333"/><path d="M12 6V30M20 6V30M4 14H28M4 22H28" stroke="#444" stroke-width="1.500"/></svg></button>
                        <button aria-label="Menu"><svg viewBox="0 0 32 32"><path d="M6 6H26M6 16H26M6 26H26" stroke="#111" stroke-width="4" stroke-linecap="round"/></svg></button>
                        <button aria-label="Ajuda das Camadas"><svg viewBox="0 0 48 48"><circle cx="24" cy="24" r="22" fill="url(#help)"/><text class="q" x="24" y="36">?</text></svg></button>
                    </div>
                    <label class="search">
                        <svg viewBox="0 0 28 28"><circle cx="12" cy="12" r="9" fill="none" stroke="#222" stroke-width="2.500"/><path d="M18 19L25 26" stroke="#222" stroke-width="3"/></svg>
                        <input type="search" placeholder="Procurar" aria-label="Procurar">
                    </label>
                    <div class="table-wrap">
                        <table>
                            <colgroup><col class="c-pad"><col class="c-name"><col class="c-icon"><col class="c-icon"><col class="c-icon"><col class="c-icon"><col class="c-mat"><col></colgroup>
                            <thead>
                                <tr><th class="bare"></th><th>Camada</th><th></th><th></th><th></th><th></th><th>Material</th><th>Tipo de Linha</th></tr>
                            </thead>
                            <tbody>
                                <tr class="default"><td></td><td>Predefinida</td><td><svg class="ico" viewBox="0 0 26 24"><use href="#check"/></svg></td><td></td><td></td><td><span class="swatch black"></span></td><td><span class="material"></span></td><td>Contínuo</td></tr>
                                <tr><td></td><td>Camada 01</td><td></td><td><svg class="ico" viewBox="0 0 16 24"><use href="#bulb"/></svg></td><td><svg class="ico" viewBox="-1 -1 24 26"><use href="#unlock"/></svg></td><td><span class="swatch red"></span></td><td><span class="material"></span></td><td>Contínuo</td></tr>
                                <tr><td></td><td>Camada 02</td><td></td><td><svg class="ico" viewBox="0 0 16 24"><use href="#bulb"/></svg></td><td><svg class="ico" viewBox="-1 -1 24 26"><use href="#unlock"/></svg></td><td><span class="swatch purple"></span></td><td><span class="material"></span></td><td>Contínuo</td></tr>
                                <tr><td></td><td>Camada 03</td><td></td><td><svg class="ico" viewBox="0 0 16 24"><use href="#bulb"/></svg></td><td><svg class="ico" viewBox="-1 -1 24 26"><use href="#unlock"/></svg></td><td><span class="swatch blue"></span></td><td><span class="material"></span></td><td>Contínuo</td></tr>
                                <tr><td></td><td>Camada 04</td><td></td><td><svg class="ico" viewBox="0 0 16 24"><use href="#bulb"/></svg></td><td><svg class="ico" viewBox="-1 -1 24 26"><use href="#unlock"/></svg></td><td><span class="swatch green"></span></td><td><span class="material"></span></td><td>Contínuo</td></tr>
                                <tr><td></td><td>Camada 05</td><td></td><td><svg class="ico" viewBox="0 0 16 24"><use href="#bulb"/></svg></td><td><svg class="ico" viewBox="-1 -1 24 26"><use href="#unlock"/></svg></td><td><span class="swatch white"></span></td><td><span class="material"></span></td><td>Contínuo</td></tr>
                            </tbody>
                        </table>
                    </div>
                    <div class="scroll-x"><i></i></div>
                </div>
                <nav class="side-tabs">
                    <button aria-label="Propriedades"><svg viewBox="2 2 44 44"><use href="#wheel"/></svg></button>
                    <button class="active" aria-label="Camadas"><svg viewBox="2 2 44 44"><use href="#layers"/></svg></button>
                    <button aria-label="Visualização"><svg viewBox="0 0 32 32"><path d="M1 2H31V25H1Z" fill="#222"/><path d="M5 6H27V21H5Z" fill="#b4b4b4"/><path d="M13 25H19L23 30H9Z" fill="#222"/></svg></button>
                    <button aria-label="Ajuda"><svg viewBox="0 0 32 32"><path d="M2 2H30V30H2Z" fill="#fff" stroke="#222" stroke-width="2"/><path d="M3 3H29V7H3Z" fill="#5a62c8"/><circle cx="16" cy="18" r="10" fill="#3f5cd0"/><text class="q small" x="16" y="25">?</text></svg></button>
                </nav>
            </div>
        </aside>
    </main>

    <footer>
        <div class="history">
            <div class="grip-small"><i></i><i></i></div>
            <div class="history-text">
                <p>Escolha uma opção ( Tudo Fator Seleção Extensões )_</p>
                <p>Não foi possível fazer zoom - não há objetos visíveis.</p>
            </div>
            <div class="scroll-y"><i></i></div>
        </div>
        <div class="status">
            <button class="side-icon" aria-label="Painel esquerdo"><svg viewBox="0 0 24 24"><path d="M2 2H22V22H2Z" fill="#f0f0f0" stroke="#4a4a4a" stroke-width="3"/><path d="M2 2H9V22H2Z" fill="#4a4a4a"/></svg></button>
            <button class="list-icon" aria-label="Lista"><svg viewBox="0 0 30 28"><path d="M0 3h3M7 3h22M0 14h3M7 14h22M0 25h3M7 25h22" stroke="#777" stroke-width="3"/></svg></button>
            <button class="s-plane">PlanoC</button>
            <span class="s-x">x -270.70</span>
            <span class="s-y">y 1030.10</span>
            <span class="s-z">z 0</span>
            <button class="s-unit">Centímetros</button>
            <button class="s-layer"><i></i>Predefinida</button>
            <button class="s-snap">Snap à Grelha</button>
            <button class="s-orto">Orto</button>
            <button class="s-plano">Plano</button>
            <button class="pill">Osnap</button>
            <button class="pill">SmartTrack</button>
            <button class="s-gumball">Gumball (PlanoC)</button>
            <button class="s-auto"><svg viewBox="0 0 20 28"><path d="M5 12V7a5 5 0 0 1 10 0V12" fill="none" stroke="#8c8c8c" stroke-width="2"/><rect x="1" y="12" width="18" height="14" rx="1" fill="#ececec" stroke="#8c8c8c" stroke-width="2"/></svg>Auto PlanoC (Objeto)</button>
            <button class="s-hist">Gravar Histórico</button>
            <button class="pill">Filtro</button>
            <span class="s-min">Minutos desde a última gravação</span>
            <button class="side-icon right-icon" aria-label="Painel direito"><svg viewBox="0 0 24 24"><path d="M2 2H22V22H2Z" fill="#f0f0f0" stroke="#4a4a4a" stroke-width="3"/><path d="M15 2H22V22H15Z" fill="#4a4a4a"/></svg></button>
        </div>
    </footer>
    <script src="script.js"></script>
</body>
</html>
```

FILE: styles.css
```css
* {
    margin: 0;
    padding: 0;
    box-sizing: border-box;
}

body {
    height: 100vh;
    padding: 0 6px 6px;
    display: flex;
    flex-direction: column;
    gap: 6px;
    overflow: hidden;
    background-color: #d8d9de;
    color: #262626;
    font-family: Inter, "Liberation Sans", sans-serif;
    font-size: 22px;
}

button, input {
    font: inherit;
    color: inherit;
    border: none;
    background: none;
}

svg {
    display: block;
}

.defs {
    position: absolute;
    width: 0;
    height: 0;
}

.q {
    font: bold 38px "Liberation Serif", serif;
    fill: white;
    text-anchor: middle;
}

.q.small {
    font-size: 20px;
}

.letter-t {
    font: bold 60px "Liberation Serif", serif;
    fill: #6a82f4;
    stroke: black;
    stroke-width: 2px;
    text-anchor: middle;
}

/* top bar */
.topbar {
    display: flex;
    height: 96px;
}

.grip {
    width: 26px;
    border-right: 2px solid #d8d9de;
    border-radius: 12px 0 0 12px;
    background-color: #ebebeb;
    display: flex;
    flex-direction: column;
    align-items: center;
    justify-content: center;
    gap: 6px;
}

.grip i, .grip-row i, .grip-small i {
    width: 6px;
    height: 6px;
    border: 2px solid #a2a2a2;
    border-radius: 50%;
}

.topbar-main {
    flex: 1;
}

.tabs {
    display: flex;
    height: 42px;
}

.tab {
    padding: 2px 20px 0 21px;
    color: #5c5c5e;
}

.tab.active {
    background-color: #ebebeb;
    border-radius: 0 12px 0 0;
    color: #1e1e1e;
}

.gear-btn {
    width: 24px;
    height: 24px;
    margin: auto 8px auto auto;
}

.toolbar {
    height: 54px;
    display: flex;
    background-color: #ebebeb;
}

.tool {
    position: relative;
    width: 56px;
    height: 54px;
    padding-top: 2px;
    display: flex;
    align-items: center;
    justify-content: center;
}

.tool svg {
    width: 48px;
    height: 48px;
}

.tool.more::after {
    content: "";
    position: absolute;
    right: 0;
    bottom: 0;
    width: 11px;
    height: 10px;
    background-color: #666;
    clip-path: polygon(100% 0, 100% 100%, 0 100%);
}

/* main area */
.workspace {
    flex: 1;
    min-height: 0;
    display: grid;
    grid-template-columns: 252px 1fr 754px;
    gap: 6px;
}

.left {
    display: grid;
    grid-template-rows: 802fr 796fr;
    gap: 6px;
}

.panel {
    background-color: #ebebeb;
    border-radius: 12px 12px 0 0;
}

.grip-row {
    height: 26px;
    display: flex;
    align-items: center;
    justify-content: center;
    gap: 6px;
    border-bottom: 2px solid #d8d9de;
}

.command {
    display: block;
    width: 216px;
    height: 40px;
    margin: 21px 18px 25px;
    padding: 0 7px;
    background-color: white;
    border: 1px solid #d6d6d6;
    border-bottom: 2px solid #b0b0b0;
    font-size: 25px;
}

input::placeholder {
    color: #bcbcbc;
    opacity: 1;
}

.palette {
    display: grid;
    grid-template-columns: repeat(4, 56px);
    padding-left: 8px;
}

.palette .tool {
    height: 56px;
    padding-top: 0;
}

.panel-head {
    height: 40px;
    padding-left: 1px;
    display: flex;
    align-items: center;
    border-bottom: 2px solid #d8d9de;
}

.panel-head h2 {
    font-size: 25px;
    font-weight: normal;
    color: #848484;
}

.osnap-tabs {
    display: flex;
    height: 40px;
    background-color: #d8d9de;
}

.osnap-tab {
    width: 72px;
    display: flex;
    align-items: center;
    justify-content: center;
}

.osnap-tab.active {
    background-color: #ebebeb;
    border-radius: 0 10px 0 0;
}

.osnap-tab svg {
    width: 36px;
    height: 36px;
}

.snaps {
    padding: 15px 28px;
}

.snap {
    display: flex;
    align-items: center;
    gap: 8px;
    height: 30px;
}

.snap.last {
    margin-top: 34px;
}

.snap input {
    appearance: none;
    width: 24px;
    height: 23px;
    background-color: white;
    border: 1px solid #cfcfcf;
    border-radius: 5px;
    box-shadow: inset 0 1px 2px #ccc;
}

/* viewports */
.center {
    min-width: 0;
    display: flex;
    flex-direction: column;
}

.views {
    flex: 1;
    min-height: 0;
    display: grid;
    grid-template-columns: 928fr 916fr;
    grid-template-rows: 784fr 762fr;
    gap: 6px;
    background-color: #dfe0e5;
}

.view {
    position: relative;
    min-width: 0;
    min-height: 0;
    overflow: hidden;
    background-color: #9da1a9;
}

.view canvas {
    position: absolute;
    width: 100%;
    height: 100%;
}

.view-title {
    position: absolute;
    left: 2px;
    top: 2px;
    height: 38px;
    display: flex;
    background-color: #929292;
    color: white;
}

.view-title.current {
    background-color: #21548f;
}

.view-title button {
    padding: 0 9px 0 8px;
    font-size: 24px;
    font-weight: bold;
}

.view-title .arrow {
    width: 33px;
    padding: 0;
    border-left: 2px solid white;
    display: flex;
    align-items: center;
    justify-content: center;
}

.arrow::after {
    content: "";
    border: 8px solid transparent;
    border-top-color: white;
    border-bottom: none;
}

.axes {
    position: absolute;
    left: 50px;
    bottom: 40px;
    width: 120px;
    height: 120px;
    overflow: visible;
}

.axes path {
    fill: none;
    stroke: #76787b;
    stroke-width: 2px;
}

.axes text {
    font-size: 26px;
    fill: #606164;
}

.view-tabs {
    height: 52px;
    padding: 0 0 4px 20px;
    display: flex;
    align-items: center;
    background-color: #f0f0f0;
}

.layout-btn {
    margin-right: 32px;
}

.layout-btn + .layout-btn {
    margin-right: 0;
}

.layout-btn svg {
    width: 32px;
    height: 28px;
}

.view-tab {
    display: flex;
    align-items: center;
    font-size: 25px;
    color: #6a6a6a;
    padding-right: 42px;
}

.view-tab::before {
    content: "";
    width: 2px;
    height: 28px;
    margin-right: 38px;
    background-color: #777;
}

.layout-btn + .view-tab {
    margin-left: 26px;
}

.view-tab.current {
    color: #7d2f8a;
}

/* layers panel */
.right {
    display: flex;
    flex-direction: column;
}

.right-body {
    flex: 1;
    min-height: 0;
    display: flex;
}

.layers {
    flex: 1;
    min-width: 0;
    display: flex;
    flex-direction: column;
    padding: 22px 24px 18px 16px;
}

.layer-tools {
    display: flex;
    gap: 12px;
    padding-left: 6px;
}

.layer-tools svg {
    width: 32px;
    height: 32px;
}

.dim {
    fill: #d4d4d4;
    stroke: #a6a6a6;
    stroke-width: 2px;
}

.search {
    margin: 17px 2px 11px;
    height: 42px;
    padding: 1px 0 0 11px;
    display: flex;
    align-items: center;
    gap: 14px;
    background-color: white;
    border: 1px solid #dcdcdc;
    border-bottom: 2px solid #b4b4b4;
    border-radius: 10px;
}

.search svg {
    width: 28px;
    height: 28px;
}

.search input {
    flex: 1;
    font-size: 25px;
    outline: none;
}

.table-wrap {
    flex: 1;
    min-height: 0;
    overflow: hidden;
    background-color: white;
    border-bottom: 2px solid #e6e6e6;
}

table {
    width: 100%;
    table-layout: fixed;
    border-collapse: collapse;
}

.c-pad {
    width: 50px;
}

.c-name {
    width: 141px;
}

.c-icon {
    width: 40px;
}

.c-mat {
    width: 161px;
}

th {
    height: 55px;
    padding-left: 4px;
    text-align: left;
    font-weight: normal;
    white-space: nowrap;
    border-bottom: 2px solid #e4e4e4;
    background: linear-gradient(#e0e0e0, #e0e0e0) right center / 2px 32px no-repeat;
}

th.bare {
    background: none;
}

tbody::before {
    content: "";
    display: table-row;
    height: 9px;
}

td {
    height: 38px;
    padding-left: 4px;
    border-bottom: 2px solid #e4e4e4;
    white-space: nowrap;
}

td:first-child, tr:last-child td {
    border-bottom: none;
}

.default {
    font-weight: bold;
}

.ico {
    width: 26px;
    height: 26px;
    margin-left: 4px;
}

.swatch {
    display: block;
    width: 26px;
    height: 26px;
    margin-left: 3px;
    border: 2px solid black;
}

.black {
    background-color: black;
}

.red {
    background-color: #b82418;
}

.purple {
    background-color: #732bc6;
}

.blue {
    background-color: #0000f5;
}

.green {
    background-color: #347c20;
}

.material {
    display: block;
    width: 32px;
    height: 32px;
    border: 2px solid #7c7c7c;
    border-radius: 50%;
    box-shadow: inset 0 0 4px #bbb;
}

.scroll-x {
    height: 26px;
    padding: 5px 6px;
    background-color: #fafafa;
}

.scroll-x i {
    display: block;
    width: 59%;
    height: 16px;
    border-radius: 8px;
    background-color: #c1c1c1;
}

.side-tabs {
    width: 40px;
    background-color: #d8d9de;
}

.side-tabs button {
    display: flex;
    align-items: center;
    justify-content: center;
    width: 40px;
    height: 72px;
}

.side-tabs .active {
    background-color: #ebebeb;
    border-radius: 0 10px 10px 0;
}

.side-tabs svg {
    width: 30px;
    height: 30px;
}

/* history and status */
.history {
    height: 32px;
    display: flex;
    background-color: #ebebeb;
    overflow: hidden;
    color: #404040;
}

.grip-small {
    width: 40px;
    border-right: 2px solid #d8d9de;
    border-radius: 12px 0 0 12px;
    display: flex;
    flex-direction: column;
    align-items: center;
    justify-content: center;
    gap: 6px;
}

.history-text {
    flex: 1;
    padding-left: 10px;
    display: flex;
    flex-direction: column;
    justify-content: flex-end;
}

.history-text p {
    font-size: 23px;
    line-height: 28px;
}

.scroll-y {
    width: 28px;
    padding: 0 6px;
    background-color: #fafafa;
}

.scroll-y i {
    display: block;
    width: 16px;
    height: 26px;
    border-radius: 0 0 8px 8px;
    background-color: #c1c1c1;
}

.status {
    height: 50px;
    display: flex;
    align-items: center;
    background-color: #ebebeb;
    color: #4e4e4e;
    white-space: nowrap;
}

.status button, .status span {
    text-align: left;
}

.side-icon {
    width: 46px;
    padding-left: 9px;
}

.side-icon svg {
    width: 26px;
    height: 26px;
}

.list-icon svg {
    width: 30px;
    height: 28px;
}

.list-icon {
    width: 79px;
}

.s-plane {
    width: 146px;
}

.s-x {
    width: 143px;
}

.s-y {
    width: 178px;
}

.s-z {
    width: 123px;
}

.s-unit {
    width: 172px;
}

.s-layer {
    width: 238px;
    display: flex;
    align-items: center;
    gap: 13px;
}

.s-layer i {
    width: 32px;
    height: 32px;
    background-color: black;
}

.s-snap {
    width: 188px;
}

.s-orto {
    width: 86px;
}

.s-plano {
    width: 81px;
}

.pill {
    height: 38px;
    padding: 0 16px;
    margin-right: 7px;
    border-radius: 6px;
    background-color: white;
    color: #1c1c1c;
    font-weight: bold;
}

.s-gumball {
    width: 248px;
    padding-left: 24px;
}

.s-auto {
    width: 310px;
    display: flex;
    align-items: center;
    gap: 19px;
}

.s-auto svg {
    width: 20px;
    height: 28px;
}

.s-hist {
    width: 196px;
}

.s-min {
    width: 141px;
    margin-left: 23px;
    overflow: hidden;
}

.right-icon {
    margin-left: auto;
    padding-left: 10px;
}
```

FILE: script.js
```javascript
const MINOR = "#92979e";
const MAJOR = "#82868a";
const GREEN = "#589a4c";
const RED = "#964b4b";

const drawLine = (ctx, color, width, x1, y1, x2, y2) => {
    ctx.strokeStyle = color;
    ctx.lineWidth = width;
    ctx.beginPath();
    ctx.moveTo(x1, y1);
    ctx.lineTo(x2, y2);
    ctx.stroke();
};

// parallel views: square grid around the centre
const drawFlat = (ctx, w, h, step) => {
    const cx = Math.round(w / 2);
    const cy = Math.round(h / 2);
    const count = Math.ceil(Math.max(w, h) / step) * 5 + 10;
    for (const major of [false, true]) {
        for (let i = -count; i <= count; i++) {
            if ((i % 10 === 0) !== major) continue;
            const d = Math.round(i * step / 10);
            const color = major ? MAJOR : MINOR;
            drawLine(ctx, color, 1, cx + d + 0.5, 0, cx + d + 0.5, h);
            drawLine(ctx, color, 1, 0, cy + d + 0.5, w, cy + d + 0.5);
        }
    }
    drawLine(ctx, GREEN, 2, cx, cy, cx, 0);
    drawLine(ctx, RED, 2, cx, cy, w, cy);
};

// perspective view: ground plane projected around the centre
const project = (x, y, w, h) => {
    const k = 1 - 0.0295 * x + 0.0515 * y;
    const ox = 1656.7;
    const oy = 494;
    return [
        (47.85 * x + 141.4 * y + ox) / k - ox + w / 2,
        (13.53 * x - 23.04 * y + oy) / k - oy + h / 2,
        k
    ];
};

const drawGround = (ctx, w, h, color, x1, y1, x2, y2, width) => {
    // keep the end points in front of the camera
    const k1 = project(x1, y1, w, h)[2];
    const k2 = project(x2, y2, w, h)[2];
    const near = 0.05;
    if (k1 < near && k2 < near) return;
    const t = (near - k1) / (k2 - k1);
    const mx = x1 + (x2 - x1) * t;
    const my = y1 + (y2 - y1) * t;
    const a = k1 < near ? project(mx, my, w, h) : project(x1, y1, w, h);
    const b = k2 < near ? project(mx, my, w, h) : project(x2, y2, w, h);
    drawLine(ctx, color, width, a[0], a[1], b[0], b[1]);
};

const drawPerspective = (ctx, w, h) => {
    const size = 30;
    for (const major of [false, true]) {
        ctx.globalAlpha = major ? 0.9 : 0.5;
        for (let i = -size * 10; i <= size * 10; i++) {
            if ((i % 10 === 0) !== major) continue;
            const color = major ? MAJOR : MINOR;
            const width = major ? 1.5 : 1;
            drawGround(ctx, w, h, color, i / 10, -size, i / 10, size, width);
            drawGround(ctx, w, h, color, -size, i / 10, size, i / 10, width);
        }
    }
    ctx.globalAlpha = 1;
    drawGround(ctx, w, h, GREEN, 0, 0, 0, size, 2);
    drawGround(ctx, w, h, RED, 0, 0, size, 0, 2);
};

const drawViews = () => {
    document.querySelectorAll(".view canvas").forEach((canvas) => {
        const w = canvas.width = canvas.clientWidth;
        const h = canvas.height = canvas.clientHeight;
        const ctx = canvas.getContext("2d");
        const step = Number(canvas.dataset.step);
        if (step) {
            drawFlat(ctx, w, h, step);
        } else {
            drawPerspective(ctx, w, h);
        }
    });
};

drawViews();
window.addEventListener("resize", drawViews);
```
